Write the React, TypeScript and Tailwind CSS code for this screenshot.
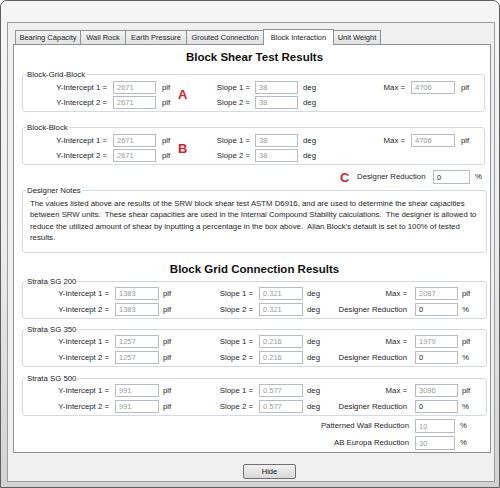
import React from 'react';

const tabs = [
  { name: 'Bearing Capacity', w: 'w-[66px]' },
  { name: 'Wall Rock', w: 'w-[46px]' },
  { name: 'Earth Pressure', w: 'w-[62px]' },
  { name: 'Grouted Connection', w: 'w-[78px]' },
  { name: 'Block Interaction', w: 'w-[71px]', active: true },
  { name: 'Unit Weight', w: 'w-[48px]' },
];

const Field = ({ value, dark, w = 'w-[43px]', h = 'h-[13px]' }: { value: string; dark?: boolean; w?: string; h?: string }) => (
  <div
    className={`${w} ${h} border border-[#b7bcc2] bg-white pl-[3px] text-[7.5px] leading-[11px] flex items-center ${
      dark ? 'text-[#222]' : 'text-[#9b9b9b]'
    }`}
  >
    {value}
  </div>
);

const Lbl = ({ children, right, pr = '' }: { children: React.ReactNode; right?: boolean; pr?: string }) => (
  <div className={`text-[7.8px] leading-[13px] whitespace-nowrap ${right ? 'text-right' : ''} ${pr}`}>{children}</div>
);

const Group = ({ title, children, className = '' }: { title: string; children: React.ReactNode; className?: string }) => (
  <fieldset className={`border border-[#d3dbe0] rounded-[3px] ${className}`}>
    <legend className="ml-[3px] px-[1px] text-[7.8px] leading-[9px] text-[#222]">{title}</legend>
    {children}
  </fieldset>
);

const Letter = ({ ch }: { ch: string }) => (
  <div className="row-span-2 flex items-center text-[13px] font-bold text-[#d3232b] leading-none">{ch}</div>
);

const BlockGroup = ({ title, letter, className }: { title: string; letter: string; className: string }) => (
  <Group title={title} className={className}>
    <div className="grid grid-cols-[90px_43px_22px_17px_60px_43px_32px_81px_44px_1fr] grid-rows-[13px_13px] gap-y-[2px] pt-[2px] pb-[2px] items-center">
      <Lbl right pr="pr-[6px]">Y-Intercept 1 =</Lbl>
      <Field value="2671" />
      <Lbl pr="pl-[6px]">plf</Lbl>
      <Letter ch={letter} />
      <Lbl right pr="pr-[5px]">Slope 1 =</Lbl>
      <Field value="38" />
      <Lbl pr="pl-[5px]">deg</Lbl>
      <Lbl right pr="pr-[6px]">Max =</Lbl>
      <Field value="4706" w="w-[44px]" />
      <Lbl pr="pl-[6px]">plf</Lbl>
      <Lbl right pr="pr-[6px]">Y-Intercept 2 =</Lbl>
      <Field value="2671" />
      <Lbl pr="pl-[6px]">plf</Lbl>
      <Lbl right pr="pr-[5px]">Slope 2 =</Lbl>
      <Field value="38" />
      <Lbl pr="pl-[5px]">deg</Lbl>
    </div>
  </Group>
);

const StrataGroup = ({ title, yi, slope, max, className }: { title: string; yi: string; slope: string; max: string; className: string }) => (
  <Group title={title} className={className}>
    <div className="grid grid-cols-[92px_44px_36px_64px_44px_27px_85px_43px_1fr] grid-rows-[13px_13px] gap-y-[3px] pt-[1.5px] pb-[2px] items-center">
      <Lbl right pr="pr-[6px]">Y-Intercept 1 =</Lbl>
      <Field value={yi} w="w-[44px]" />
      <Lbl pr="pl-[4px]">plf</Lbl>
      <Lbl right pr="pr-[6px]">Slope 1 =</Lbl>
      <Field value={slope} w="w-[44px]" />
      <Lbl pr="pl-[4px]">deg</Lbl>
      <Lbl right pr="pr-[8px]">Max =</Lbl>
      <Field value={max} />
      <Lbl pr="pl-[4px]">plf</Lbl>
      <Lbl right pr="pr-[6px]">Y-Intercept 2 =</Lbl>
      <Field value={yi} w="w-[44px]" />
      <Lbl pr="pl-[4px]">plf</Lbl>
      <Lbl right pr="pr-[6px]">Slope 2 =</Lbl>
      <Field value={slope} w="w-[44px]" />
      <Lbl pr="pl-[4px]">deg</Lbl>
      <Lbl right pr="pr-[8px]">Designer Reduction</Lbl>
      <Field value="0" dark />
      <Lbl pr="pl-[4px]">%</Lbl>
    </div>
  </Group>
);

export default function App() {
  return (
    <div className="w-[500px] h-[488px] rounded-t-[7px] border border-[#5f5f5f] bg-gradient-to-b from-[#f6f6f6] via-[#ececec] to-[#d2d2d2] pt-[21px] pl-[6px] pr-[4px] pb-[5px] font-['Liberation_Sans',Arial,sans-serif] text-[#1e1e1e]">
      <div className="w-[488px] h-[460px] border border-[#9c9c9c] bg-[#f0f0f0] flex flex-col">
        {/* tab strip */}
        <div className="ml-[5px] mt-[6px] h-[15px] pl-[2px] flex items-end">
          {tabs.map((t, i) =>
            t.active ? (
              <div
                key={t.name}
                className={`${t.w} -ml-px h-[16px] -mb-px relative z-10 bg-white border border-b-0 border-[#8e9297] text-[7.5px] leading-[13px] text-center pt-[1px] whitespace-nowrap`}
              >
                {t.name}
              </div>
            ) : (
              <div
                key={t.name}
                className={`${t.w} ${i === 0 ? '' : '-ml-px'} h-[14px] bg-gradient-to-b from-[#f4f4f4] to-[#e2e2e2] border border-b-0 border-[#8e9297] text-[7.5px] leading-[13px] text-center whitespace-nowrap`}
              >
                {t.name}
              </div>
            )
          )}
        </div>

        {/* tab page */}
        <div className="ml-[5px] w-[478px] h-[415px] border border-[#8e9297] bg-white pl-[8px] pr-[3px] pt-[5px] flex flex-col">
          <div className="text-center text-[11.5px] leading-[14px] font-bold text-[#111]">Block Shear Test Results</div>

          <BlockGroup title="Block-Grid-Block" letter="A" className="mt-[5.5px] mr-[2px]" />
          <BlockGroup title="Block-Block" letter="B" className="mt-[11.5px] mr-[2px]" />

          <div className="mt-[5px] h-[14px] flex items-center pl-[318px]">
            <div className="w-[17px] text-[13px] font-bold text-[#d3232b] leading-none">C</div>
            <div className="w-[76px] text-[7.8px] whitespace-nowrap">Designer Reduction</div>
            <Field value="0" dark w="w-[37px]" h="h-[14px]" />
            <div className="pl-[5px] text-[7.8px]">%</div>
          </div>

          <Group title="Designer Notes" className="mt-[1.5px]">
            <div className="pl-[7px] pt-[3px] pb-[8.5px] text-[7.8px] leading-[11.5px] whitespace-pre text-[#1e1e1e]">
              {'The values listed above are results of the SRW block shear test ASTM D6916, and are used to determine the shear capacities'}
              <br />
              {'between SRW units.  These shear capacities are used in the Internal Compound Stability calculations.  The designer is allowed to'}
              <br />
              {"reduce the utilized amount of shear by inputting a percentage in the box above.  Allan Block's default is set to 100% of tested"}
              <br />
              {'results.'}
            </div>
          </Group>

          <div className="mt-[9px] text-center text-[11.5px] leading-[14px] font-bold text-[#111]">Block Grid Connection Results</div>

          <StrataGroup title="Strata SG 200" yi="1383" slope="0.321" max="2087" className="mt-[0.5px]" />
          <StrataGroup title="Strata SG 350" yi="1257" slope="0.216" max="1979" className="mt-[5.5px]" />
          <StrataGroup title="Strata SG 500" yi="991" slope="0.577" max="3096" className="mt-[6.5px]" />

          <div className="mt-[3px] flex items-center">
            <div className="w-[393px] pr-[6px] text-right text-[7.8px]">Patterned Wall Reduction</div>
            <Field value="10" w="w-[40px]" h="h-[14px]" />
            <div className="pl-[5px] text-[7.8px]">%</div>
          </div>
          <div className="mt-[3px] flex items-center">
            <div className="w-[393px] pr-[6px] text-right text-[7.8px]">AB Europa Reduction</div>
            <Field value="30" w="w-[40px]" h="h-[14px]" />
            <div className="pl-[5px] text-[7.8px]">%</div>
          </div>
        </div>

        <div className="mt-[4px] pl-[235px]">
          <button className="w-[53px] h-[15px] rounded-[2px] border border-[#707070] bg-gradient-to-b from-[#f2f2f2] to-[#d9d9d9] text-[7.5px] leading-[13px] text-[#111]">
            Hide
          </button>
        </div>
      </div>
    </div>
  );
}
